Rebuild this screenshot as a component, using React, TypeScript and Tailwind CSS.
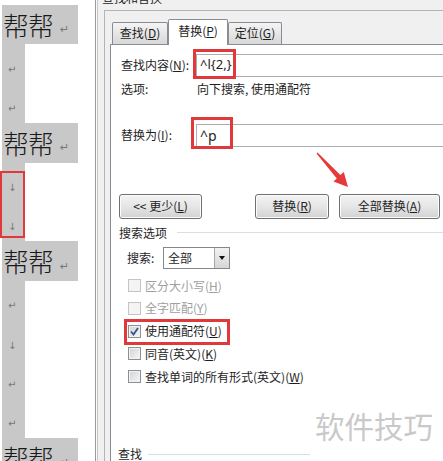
const CJK = "font-['Noto_Sans_CJK_SC','Noto_Sans',sans-serif]";

type Line = "text" | "enter" | "down";

const docLines: Line[] = ["text", "enter", "enter", "text", "down", "down", "text", "enter", "down", "enter", "enter", "text"];

function DocLine({ kind }: { kind: Line }) {
  if (kind === "text") {
    return (
      <div className="h-[39.4px] w-[76px] ml-[2px] bg-[#c8c8c8] flex items-center pl-[1px] shrink-0">
        <span className="text-[26px] leading-none text-[#1a1a1a] font-light tracking-[-1px]">帮帮</span>
        <span className="text-[11px] leading-none text-[#777] ml-[7px] mt-[10px] font-['DejaVu_Sans',sans-serif]">↵</span>
      </div>
    );
  }
  return (
    <div className="h-[39.4px] w-[23px] ml-[2px] bg-[#c8c8c8] flex items-end pb-[9px] pl-[6px] shrink-0">
      <span className="text-[10px] leading-none text-[#777] font-['DejaVu_Sans',sans-serif]">{kind === "enter" ? "↵" : "↓"}</span>
    </div>
  );
}

function Tab({ label, hot, active, w }: { label: string; hot: string; active?: boolean; w: string }) {
  return (
    <div
      className={
        active
          ? `${w} h-[26px] -mb-px relative z-10 bg-white border border-b-0 border-[#898c95] rounded-t-[2px] flex items-center justify-center pb-[3px]`
          : `${w} h-[22px] bg-gradient-to-b from-[#f4f4f4] via-[#e6e6e6] to-[#d8d8d8] border border-b-0 border-[#898c95] rounded-t-[2px] flex items-center justify-center`
      }
    >
      <span>
        {label}(<span className="underline underline-offset-[1px]">{hot}</span>)
      </span>
    </div>
  );
}

function Button({ w, children }: { w: string; children: React.ReactNode }) {
  return (
    <div className={`${w} h-[25px] border border-[#707070] rounded-[3px] bg-gradient-to-b from-[#f3f3f3] via-[#e6e6e6] to-[#d2d2d2] shadow-[inset_0_0_0_1px_#fcfcfc] flex items-center justify-center`}>
      {children}
    </div>
  );
}

function CheckBox({ checked, disabled }: { checked?: boolean; disabled?: boolean }) {
  return (
    <div
      className={
        disabled
          ? "w-[13px] h-[13px] border border-[#c4c4c4] bg-[#f4f4f4] shrink-0"
          : "w-[13px] h-[13px] border border-[#8e8f8f] bg-gradient-to-br from-[#d0d3d8] to-[#f7f7f7] shadow-[inset_0_0_0_1px_#f2f2f2] shrink-0 flex items-center justify-center"
      }
    >
      {checked && (
        <svg width="9" height="9" viewBox="0 0 9 9">
          <path d="M1 4.5 L3.5 7.5 L8 1" fill="none" stroke="#3d4f8c" strokeWidth="1.8" />
        </svg>
      )}
    </div>
  );
}

function Option({ label, hot, checked, disabled }: { label: string; hot: string; checked?: boolean; disabled?: boolean }) {
  return (
    <div className="h-[22.75px] flex items-center ml-[7px] gap-[4px]">
      <CheckBox checked={checked} disabled={disabled} />
      <span className={disabled ? "text-[#a0a0a0]" : ""}>
        {label}(<span className="underline underline-offset-[1px]">{hot}</span>)
      </span>
    </div>
  );
}

export default function App() {
  return (
    <div className={`relative w-[443px] h-[461px] overflow-hidden bg-white flex text-[12px] text-[#1e1e1e] ${CJK}`}>
      {/* document */}
      <div className="relative w-[95px] shrink-0 pt-[5px] flex flex-col">
        {docLines.map((k, i) => (
          <DocLine key={i} kind={k} />
        ))}
        <div className="absolute left-0 top-[171px] w-[25px] h-[67px] border-2 border-[#e0393b]" />
      </div>

      {/* dialog */}
      <div className="flex-1 flex flex-col bg-[#f0f0f0] border-l border-[#9a9a9a] shadow-[inset_1px_0_0_#fafafa,inset_2px_0_0_#c8c8c8]">
        <div className="h-[13px] overflow-hidden pl-[6px]">
          <div className="-mt-[9px] leading-[14px]">查找和替换</div>
        </div>
        <div className="flex-1 ml-[8px] border-l border-t border-[#b4b4b4] flex flex-col">
          <div className="h-[33px] flex items-end pl-[7px]">
            <Tab label="查找" hot="D" w="w-[56px]" />
            <Tab label="替换" hot="P" w="w-[60px]" active />
            <Tab label="定位" hot="G" w="w-[54px]" />
          </div>
          <div className="flex-1 ml-[5px] bg-white border-l border-t border-[#898c95] pl-[10px] flex flex-col">
            <div className="relative mt-[9px] h-[23px] flex items-center">
              <span className="w-[75px] shrink-0">
                查找内容(<span className="underline underline-offset-[1px]">N</span>):
              </span>
              <div className="flex-1 h-full border border-r-0 border-[#abadb3] flex items-center pl-[3px] text-[13px] font-['Noto_Sans',sans-serif]">
                ^l{"{2,}"}
              </div>
              <div className="absolute left-[72px] -top-[5px] w-[43px] h-[30px] border-[3px] border-[#e0393b]" />
            </div>
            <div className="mt-[4px] h-[16px] flex items-center">
              <span className="w-[76px] shrink-0">选项:</span>
              <span>向下搜索, 使用通配符</span>
            </div>
            <div className="relative mt-[27px] h-[23px] flex items-center">
              <span className="w-[75px] shrink-0">
                替换为(<span className="underline underline-offset-[1px]">I</span>):
              </span>
              <div className="flex-1 h-full border border-r-0 border-[#abadb3] flex items-center pl-[3px] text-[14px] font-['Noto_Sans',sans-serif]">
                ^p
              </div>
              <div className="absolute left-[70px] -top-[7px] w-[42px] h-[32px] border-[3px] border-[#e0393b]" />
            </div>
            <div className="mt-[47px] flex -ml-[2px]">
              <Button w="w-[83px]">
                <span>
                  &lt;&lt; 更少(<span className="underline underline-offset-[1px]">L</span>)
                </span>
              </Button>
              <div className="ml-[53px]">
                <Button w="w-[74px]">
                  <span>
                    替换(<span className="underline underline-offset-[1px]">R</span>)
                  </span>
                </Button>
              </div>
              <div className="ml-[10px]">
                <Button w="w-[101px]">
                  <span>
                    全部替换(<span className="underline underline-offset-[1px]">A</span>)
                  </span>
                </Button>
              </div>
            </div>
            <div className="mt-[7px] h-[14px] flex items-center -ml-[2px]">
              <span>搜索选项</span>
              <div className="flex-1 h-px bg-[#d5dfe5] ml-[10px]" />
            </div>
            <div className="mt-[7px] h-[22px] flex items-center ml-[6px]">
              <span className="w-[36px]">搜索:</span>
              <div className="w-[67px] h-full border border-[#828790] flex items-center">
                <span className="flex-1 pl-[4px]">全部</span>
                <div className="w-[15px] h-full border-l border-[#a8a8a8] bg-gradient-to-b from-[#f2f2f2] to-[#d6d6d6] flex items-center justify-center">
                  <div className="w-0 h-0 border-l-[3.5px] border-r-[3.5px] border-t-[4px] border-l-transparent border-r-transparent border-t-[#111]" />
                </div>
              </div>
            </div>
            <div className="mt-[5.6px] flex flex-col relative">
              <Option label="区分大小写" hot="H" disabled />
              <Option label="全字匹配" hot="Y" disabled />
              <Option label="使用通配符" hot="U" checked />
              <Option label="同音(英文)" hot="K" />
              <Option label="查找单词的所有形式(英文)" hot="W" />
              <div className="absolute left-[3px] top-[44.5px] w-[106px] h-[26px] border-[3px] border-[#e0393b]" />
            </div>
            <div className="mt-[59px] h-[14px] flex items-center -ml-[3px]">
              <span>查找</span>
              <div className="w-[162px] h-px bg-[#d5dfe5] ml-[6px]" />
            </div>
          </div>
        </div>
      </div>

      {/* annotation arrow */}
      <svg className="absolute left-[312px] top-[148px]" width="42" height="44" viewBox="0 0 42 44">
        <polygon points="5.5,4.5 28.4,27 31.8,24 36,39 21.4,33.4 24.8,30.4 4.5,5.5" fill="#e8393a" />
      </svg>

      {/* watermark */}
      <div className="absolute left-[315px] top-[411px] text-[29.5px] leading-none text-[#c9c9c9] tracking-[0px]">软件技巧</div>
    </div>
  );
}
